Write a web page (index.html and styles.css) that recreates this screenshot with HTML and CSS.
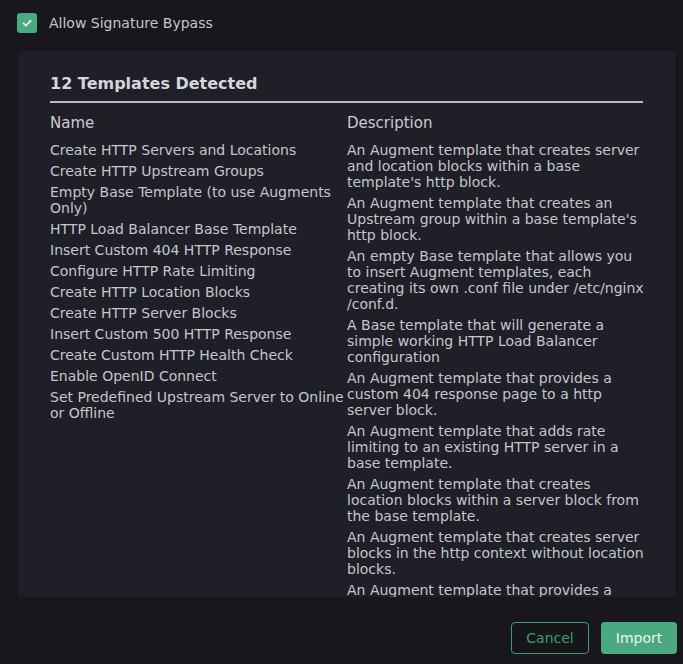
FILE: index.html
```html
<!DOCTYPE html>
<html>
<head>
<meta charset="utf-8">
<link rel="stylesheet" href="styles.css">
</head>
<body>
<div class="page">
  <label class="check-row">
    <span class="checkbox">
      <svg viewBox="0 0 20 20" width="20" height="20"><path d="M6.5 10.3 L9 12.6 L13.6 7.6" fill="none" stroke="#fff" stroke-width="1.6" stroke-linecap="round" stroke-linejoin="round"/></svg>
    </span>
    <span class="check-label">Allow Signature Bypass</span>
  </label>
  <section class="panel">
    <h2 class="title">12 Templates Detected</h2>
    <div class="cols">
      <div class="col col-name">
        <div class="col-head">Name</div>
        <div class="item">Create HTTP Servers and Locations</div>
        <div class="item">Create HTTP Upstream Groups</div>
        <div class="item">Empty Base Template (to use Augments Only)</div>
        <div class="item">HTTP Load Balancer Base Template</div>
        <div class="item">Insert Custom 404 HTTP Response</div>
        <div class="item">Configure HTTP Rate Limiting</div>
        <div class="item">Create HTTP Location Blocks</div>
        <div class="item">Create HTTP Server Blocks</div>
        <div class="item">Insert Custom 500 HTTP Response</div>
        <div class="item">Create Custom HTTP Health Check</div>
        <div class="item">Enable OpenID Connect</div>
        <div class="item">Set Predefined Upstream Server to Online or Offline</div>
      </div>
      <div class="col col-desc">
        <div class="col-head">Description</div>
        <div class="item">An Augment template that creates server and location blocks within a base template's http block.</div>
        <div class="item">An Augment template that creates an Upstream group within a base template's http block.</div>
        <div class="item">An empty Base template that allows you to insert Augment templates, each creating its own .conf file under /etc/nginx /conf.d.</div>
        <div class="item">A Base template that will generate a simple working HTTP Load Balancer configuration</div>
        <div class="item">An Augment template that provides a custom 404 response page to a http server block.</div>
        <div class="item">An Augment template that adds rate limiting to an existing HTTP server in a base template.</div>
        <div class="item">An Augment template that creates location blocks within a server block from the base template.</div>
        <div class="item">An Augment template that creates server blocks in the http context without location blocks.</div>
        <div class="item">An Augment template that provides a custom 500 response page to a http server block.</div>
      </div>
    </div>
  </section>
  <footer class="footer">
    <button class="btn btn-outline">Cancel</button>
    <button class="btn btn-solid">Import</button>
  </footer>
</div>
</body>
</html>
```

FILE: styles.css
```css
html, body {
  margin: 0;
  padding: 0;
  background: #17171c;
}
body {
  font-family: "DejaVu Sans", "Liberation Sans", sans-serif;
  color: #c9cbd1;
  width: 683px;
  height: 664px;
  overflow: hidden;
}
.page {
  display: flex;
  flex-direction: column;
  height: 664px;
}
.check-row {
  display: flex;
  align-items: center;
  gap: 12px;
  padding: 13px 0 0 17px;
  height: 20px;
}
.checkbox {
  width: 20px;
  height: 20px;
  border-radius: 3px;
  background: #49a97f;
  display: block;
}
.checkbox svg { display: block; }
.check-label {
  font-size: 14px;
  color: #c4c6cc;
}
.panel {
  margin: 18px 8px 0 18px;
  height: 546px;
  box-sizing: border-box;
  overflow: hidden;
  background: #1f1f27;
  border-radius: 4px 4px 0 0;
  padding: 23px 32px 0 32px;
}
.title {
  margin: 0;
  font-size: 16px;
  font-weight: bold;
  color: #d4d6dc;
  padding-bottom: 7px;
  border-bottom: 2px solid #b9bbc0;
  line-height: 20px;
}
.cols {
  display: flex;
  margin-top: 11px;
  margin-right: -4px;
}
.col-name { width: 297px; flex: none; }
.col-desc { flex: 1; }
.col-head {
  font-size: 15px;
  line-height: 18px;
  margin-bottom: 10px;
  color: #c9cbd1;
}
.item {
  font-size: 14px;
  line-height: 16px;
  margin-bottom: 5px;
  color: #c4c6cc;
}
.footer {
  flex: 1;
  display: flex;
  justify-content: flex-end;
  align-items: flex-start;
  gap: 12px;
  padding: 25px 6px 0 0;
  background: #18181c;
}
.btn {
  font-family: "DejaVu Sans", "Liberation Sans", sans-serif;
  font-size: 14px;
  height: 32px;
  border-radius: 4px;
  padding: 0;
  cursor: pointer;
}
.btn-outline {
  width: 78px;
  background: #16161a;
  border: 1.5px solid #3d9a73;
  color: #3d9a73;
}
.btn-solid {
  width: 76px;
  background: #4aa981;
  border: none;
  color: #eef5f1;
}
```
